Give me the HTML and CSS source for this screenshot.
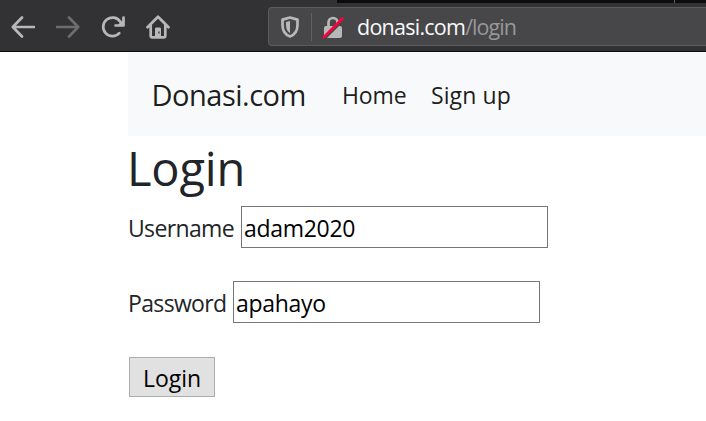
FILE: index.html
```html
<!DOCTYPE html>
<html lang="en">
<head>
<meta charset="utf-8">
<title>Login</title>
<link rel="stylesheet" href="styles.css">
</head>
<body>
<header class="chrome">
  <div class="tabs"><span class="tab-gap"></span></div>
  <div class="toolbar">
    <div class="controls">
      <svg width="24" height="24" viewBox="0 0 24 24"><path d="M11 2.500 1.800 12 11 21.500M2 12h21"/></svg>
      <svg class="disabled" width="24" height="24" viewBox="0 0 24 24"><path d="M13 2.500 22.200 12 13 21.500M22 12H1"/></svg>
      <svg width="24" height="24" viewBox="0 0 24 24"><path d="M18.300 18.200A9.300 9.300 0 1 1 19.300 6.800"/><path d="M22.500 2.500V10.500H14.500"/><path class="solid" d="M22 5v5.500h-6z"/></svg>
      <svg width="24" height="24" viewBox="0 0 24 24"><path d="M1.500 12.300 12 1.800l10.500 10.500M4.700 10v10.800c0 1 .6 1.600 1.600 1.600h11.400c1 0 1.600-.6 1.600-1.600V10"/><path class="solid" fill-rule="evenodd" d="M10.500 12.500h3c1 0 1.500.5 1.500 1.500V22H9v-8c0-1 .5-1.500 1.500-1.500zm1.800 4v2h1.300v-2z"/></svg>
    </div>
    <div class="address">
      <svg class="shield" width="18" height="22" viewBox="0 0 18 22"><path d="M9 1.500 16.500 3.600V9c0 6-2.700 9.700-7.500 11.500C4.200 18.700 1.500 15 1.500 9V3.600z"/><path class="solid" d="M9 5v12c-2.500-1.500-4-4-4-8V6z"/></svg>
      <span class="divider"></span>
      <svg class="lock" width="22" height="24" viewBox="0 0 22 24"><path d="M6.500 12V7.500a4.500 4.500 0 0 1 9 0V12"/><rect class="solid" x="2" y="11" width="18" height="12" rx="2"/><path class="cut" d="M3.500 23 21.500 5"/><path class="slash" d="M2 22 20.500 3.500"/></svg>
      <span class="url">donasi.com<span class="path">/login</span></span>
    </div>
  </div>
</header>
<main class="page">
  <nav class="navbar">
    <a class="brand">Donasi.com</a>
    <a class="link home">Home</a>
    <a class="link signup">Sign up</a>
  </nav>
  <h1>Login</h1>
  <form>
    <div class="field"><label class="user-label" for="username">Username</label><input class="user" id="username" type="text" value="adam2020"></div>
    <div class="field"><label class="pass-label" for="password">Password</label><input class="pass" id="password" type="text" value="apahayo"></div>
    <button type="button">Login</button>
  </form>
</main>
</body>
</html>
```
FILE: styles.css
```css
* { box-sizing: border-box; }
body { margin: 0; background: #fff; color: #212529; font-family: "Open Sans", "Noto Sans", sans-serif; overflow: hidden; }
svg { display: block; flex: none; fill: none; stroke: #b8b8b9; stroke-width: 2.7; stroke-linecap: round; stroke-linejoin: round; }
.solid { fill: #b8b8b9; stroke: none; }
.chrome { height: 52px; background: #323234; border-bottom: 1px solid #0c0c0d; }
.tabs { height: 3px; margin-left: 337px; background: #0c0c0d; }
.tab-gap { display: block; width: 1px; height: 3px; margin-left: 337px; background: #5c5c5e; }
.toolbar { height: 48px; display: flex; padding-top: 4px; }
.controls { width: 268px; height: 40px; display: flex; gap: 21px; padding: 8px 0 0 11px; }
.disabled { stroke: #6d6d6e; }
.address { flex: 1; height: 39px; display: flex; align-items: center; border: 1px solid #5c5c5e; border-right: 0; border-radius: 4px 0 0 4px; background: #474749; }
.shield { margin-left: 12px; }
.divider { width: 1px; height: 28px; margin-left: 12px; background: #626265; }
.lock { margin-left: 10px; }
.cut { stroke: #474749; stroke-width: 2; stroke-linecap: butt; }
.slash { stroke: #ff0039; }
.url { margin: 1px 0 0 13px; color: #f9f9fa; font-size: 21.5px; line-height: 30px; letter-spacing: -.75px; white-space: nowrap; }
.path { color: #98989a; letter-spacing: -.95px; }
.page { margin-left: 128px; }
.navbar { height: 84px; display: flex; align-items: center; padding: 2px 0 0 24px; background: #f8f9fa; color: rgba(0,0,0,.9); white-space: nowrap; }
.brand { width: 190px; margin-top: -2px; font-size: 29px; letter-spacing: -.5px; text-indent: -.5px; }
.link { font-size: 23px; letter-spacing: -.15px; }
.home { width: 89px; }
.signup { letter-spacing: .1px; }
h1 { margin: 0; height: 70px; font-size: 47px; line-height: 64px; font-weight: 400; letter-spacing: -.2px; text-indent: -1px; }
form { font-size: 23px; line-height: 42px; }
.field { display: flex; height: 42px; margin-bottom: 33px; }
label { padding-top: 1px; letter-spacing: -.65px; white-space: nowrap; }
.user-label { width: 113px; }
.pass-label { width: 105px; }
input { width: 307px; height: 42px; padding: 2px 2px 0; border: 1px solid #767676; border-radius: 0; background: #fff; color: #000; font: 23px "Open Sans", "Noto Sans", sans-serif; letter-spacing: -.3px; }
button { display: block; width: 86px; height: 40px; margin: 34px 0 0 1px; padding: 2px 0 0; border: 1px solid #adadad; border-radius: 0; background: #e1e1e1; color: #000; font: 23px/34px "Open Sans", "Noto Sans", sans-serif; }
```
